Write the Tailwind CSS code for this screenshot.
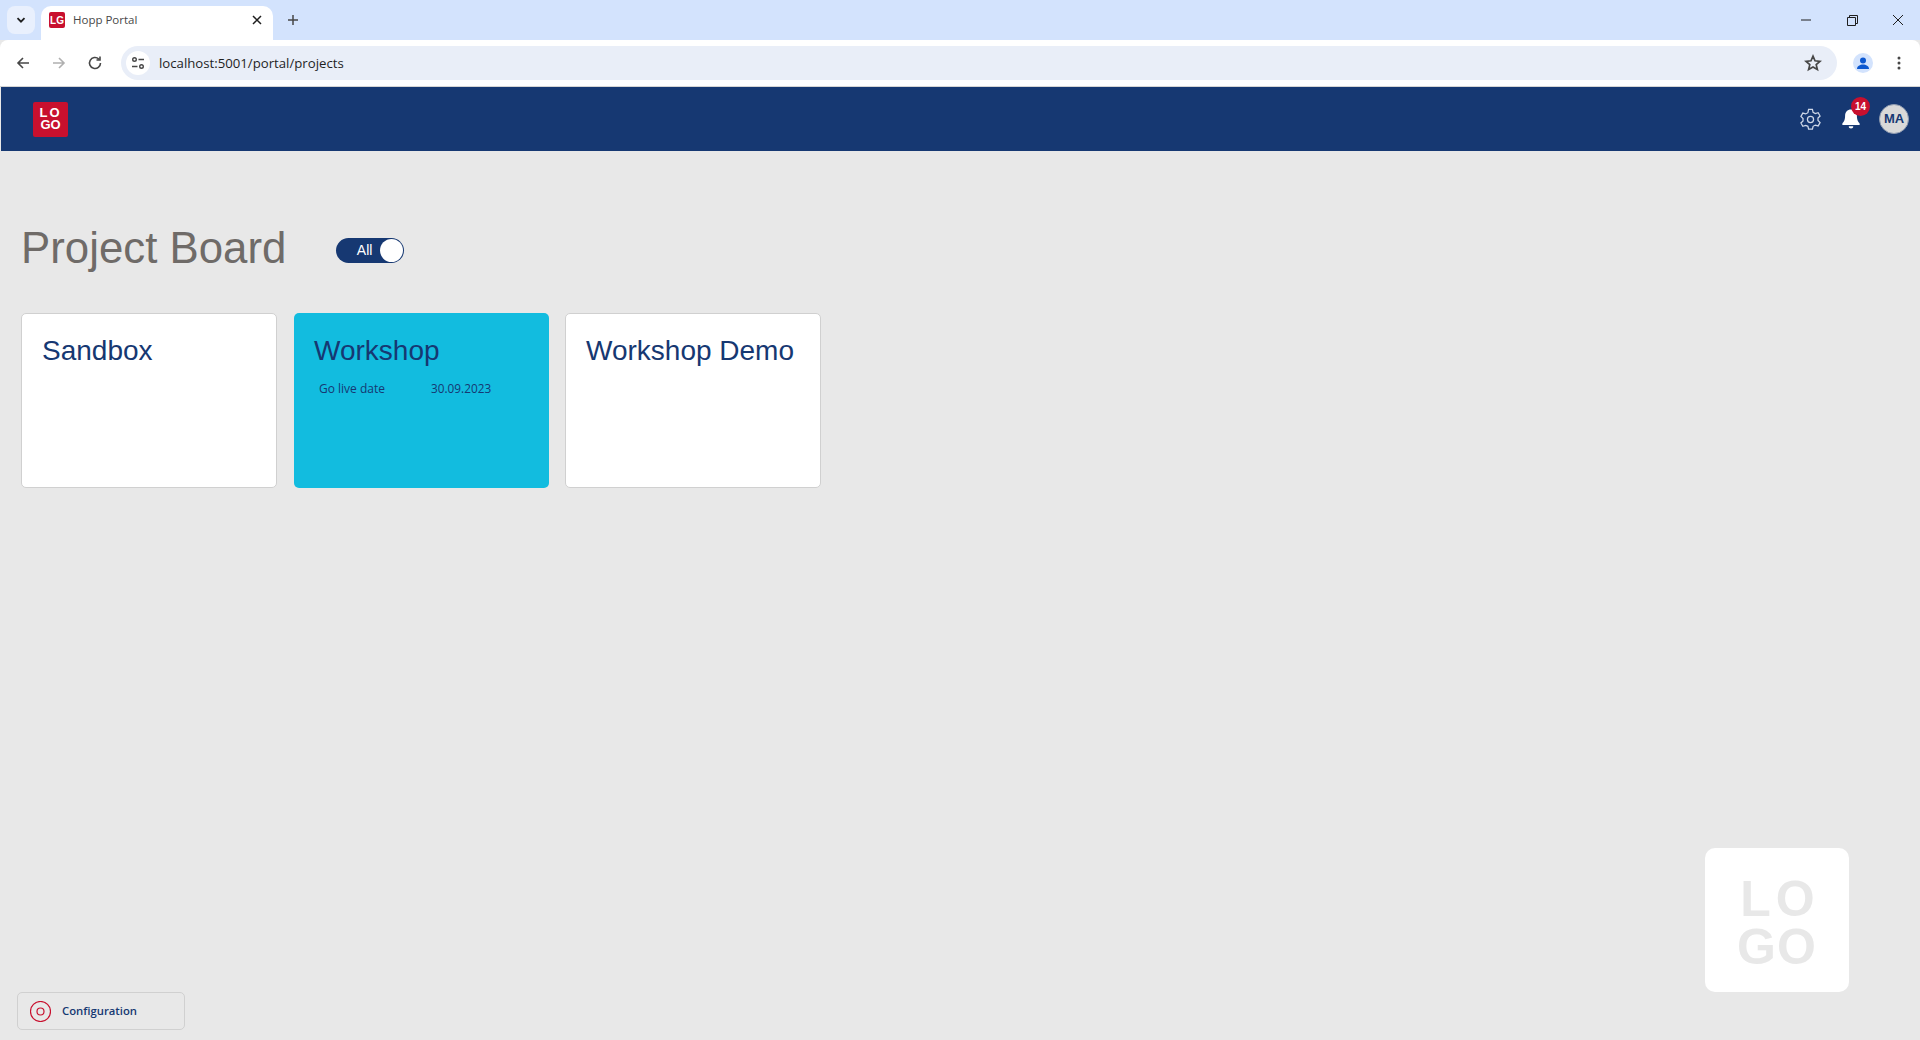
<!DOCTYPE html>
<html>
<head>
<meta charset="utf-8">
<title>Hopp Portal</title>
<script src="https://cdn.jsdelivr.net/npm/@tailwindcss/browser@4"></script>
</head>
<body class="h-[1040px] w-[1920px] overflow-hidden bg-[#e8e8e8] font-['Liberation_Sans',sans-serif]">

<!-- browser chrome -->
<div class="h-10 bg-[#d3e3fd] flex items-start relative">
    <div class="ml-[7px] mt-[6px] w-7 h-7 rounded-lg bg-[#e9f0fd] flex items-center justify-center">
        <svg width="12" height="12" viewBox="0 0 12 12" fill="none" stroke="#1f1f1f" stroke-width="1.8"><path d="M2.5 4.2 6 7.7l3.5-3.5"/></svg>
    </div>
    <div class="ml-[6px] mt-[6px] w-[232px] h-[34px] bg-white rounded-t-[10px] flex items-center pl-[8px] pr-[10px] pb-[6px]">
        <div class="w-4 h-4 rounded-[2px] bg-[#c8102e] text-white text-[10px] font-bold flex items-center justify-center">LG</div>
        <span class="ml-2 text-[11.5px] text-[#474747] font-['Open_Sans',sans-serif] flex-1">Hopp Portal</span>
        <svg width="12" height="12" viewBox="0 0 12 12" stroke="#1f1f1f" stroke-width="1.5"><path d="M2 2l8 8M10 2l-8 8"/></svg>
    </div>
    <svg class="ml-[14px] mt-[14px]" width="12" height="12" viewBox="0 0 12 12" stroke="#474747" stroke-width="1.5"><path d="M6 1v10M1 6h10"/></svg>
    <div class="ml-auto flex items-center h-10 pr-[16px]">
        <svg width="10" height="10" viewBox="0 0 10 10" stroke="#1f1f1f"><path d="M0 5h10"/></svg>
        <svg class="ml-[36px]" width="11" height="11" viewBox="0 0 11 11" fill="none" stroke="#1f1f1f"><path d="M.5 2.5h8v8h-8zM2.500 2.500v-2h8v8h-2"/></svg>
        <svg class="ml-[34px]" width="12" height="12" viewBox="0 0 12 12" stroke="#1f1f1f"><path d="M1 1l10 10M11 1 1 11"/></svg>
    </div>
</div>
<div class="h-[46px] bg-white rounded-tl-lg rounded-tr-lg flex items-center border-b border-[#d5d5d5] box-content -mb-px">
    <svg class="ml-[15px]" width="16" height="16" viewBox="0 0 16 16" fill="none" stroke="#474747" stroke-width="1.6"><path d="M14 8H3M8 3 3 8l5 5"/></svg>
    <svg class="ml-[20px]" width="16" height="16" viewBox="0 0 16 16" fill="none" stroke="#b0b0b0" stroke-width="1.6"><path d="M2 8h11M8 3l5 5-5 5"/></svg>
    <svg class="ml-[20px]" width="16" height="16" viewBox="0 0 16 16" fill="none" stroke="#474747" stroke-width="1.6"><path d="M13.5 8A5.5 5.5 0 1 1 11.8 4M13 1.500V5H9.500"/></svg>
    <div class="ml-[18px] w-[1716px] h-[34px] bg-[#e9eef8] rounded-full flex items-center pl-[5px]">
        <div class="w-6 h-6 rounded-full bg-white flex items-center justify-center">
            <svg width="14" height="14" viewBox="0 0 14 14" fill="none" stroke="#474747" stroke-width="1.4"><circle cx="3.5" cy="3.5" r="1.8"/><path d="M7.5 3.5H13M1 10.5h5.5"/><circle cx="10.5" cy="10.5" r="1.8"/></svg>
        </div>
        <span class="ml-[9px] pt-px text-[13.2px] text-[#1f1f1f] font-['Open_Sans',sans-serif]">localhost:5001/portal/projects</span>
        <svg class="ml-auto mr-[15px]" width="18" height="18" viewBox="0 0 18 18" fill="none" stroke="#474747" stroke-width="1.7"><path d="M9 2.200l2 4.600 5 .5-3.800 3.300 1.200 4.900L9 13l-4.400 2.500 1.200-4.900L2 7.300l5-.5z"/></svg>
    </div>
    <div class="ml-[16px] w-5 h-5 rounded-full bg-[#d3e3fd] flex items-center justify-center">
        <svg width="14" height="14" viewBox="0 0 14 14" fill="#0b57d0"><circle cx="7" cy="4.500" r="3"/><path d="M1 13c0-3 3-4.500 6-4.500s6 1.500 6 4.500z"/></svg>
    </div>
    <svg class="ml-[24px]" width="4" height="14" viewBox="0 0 4 14" fill="#474747"><circle cx="2" cy="2" r="1.500"/><circle cx="2" cy="7" r="1.500"/><circle cx="2" cy="12" r="1.500"/></svg>
</div>

<!-- app -->
<div class="ml-px h-[954px] flex flex-col relative">
    <header class="h-[64px] mt-px bg-[#163872] flex items-center pl-[32px] pr-[11px] shrink-0">
        <div class="w-[35px] h-[35px] rounded-[2px] bg-[#c8102e] text-white text-[13px] leading-[12px] font-bold text-center flex flex-col items-center justify-center">
            <span class="tracking-[2px]">LO</span>
            <span>GO</span>
        </div>
        <svg class="ml-auto" width="23" height="23" viewBox="0 0 24 24" fill="none" stroke="#cfd8e8" stroke-width="1.300"><circle cx="12" cy="12" r="3.200"/><path d="M10 1.500h4l.7 3 2.300 1.300 3-.9 2 3.500-2.200 2.100v2.600l2.200 2.100-2 3.500-3-.9-2.300 1.300-.7 3h-4l-.7-3L7 18.200l-3 .9-2-3.500 2.200-2.100v-2.600L2 8.800l2-3.500 3 .9 2.300-1.300z"/></svg>
        <div class="ml-[17px] relative w-6 h-6 flex items-center justify-center">
            <svg width="20" height="22" viewBox="0 0 22 24" fill="#ffffff"><path d="M11 1.500c-4 0-6.500 3-6.500 7 0 5-1.500 6.500-3 8.500v1.500h19V17c-1.500-2-3-3.500-3-8.500 0-4-2.500-7-6.500-7z"/><path d="M8.500 20h5c0 1.500-1 2.500-2.500 2.500S8.500 21.500 8.500 20z"/></svg>
            <div class="absolute -top-[10px] left-[12px] w-[19px] h-[19px] rounded-full bg-[#c8102e] text-white text-[10px] font-bold flex items-center justify-center">14</div>
        </div>
        <div class="ml-[16px] w-[30px] h-[30px] rounded-full bg-[#d9d9d9] border border-[#8f9bb0] text-[#163872] text-[13px] font-bold flex items-center justify-center">MA</div>
    </header>

    <main class="flex-1 pl-[20px] flex flex-col">
        <div class="flex items-center mt-[72px] h-[50px]">
            <h1 class="text-[43.8px] text-[#6f6b68] leading-none">Project Board</h1>
            <div class="ml-[50px] mt-[5px] w-[68px] h-[25px] rounded-full bg-[#163872] flex items-center justify-end pr-[1px] text-white text-[14px]">
                <span class="mr-[8px]">All</span>
                <div class="w-[23px] h-[23px] rounded-full bg-white"></div>
            </div>
        </div>

        <div class="flex gap-[16px] mt-[40px]">
            <div class="w-[256px] h-[175px] bg-white border border-[#d0d0d0] rounded-[5px] pl-[20px] pt-[19px]">
                <h2 class="text-[28px] leading-[36px] text-[#163872]">Sandbox</h2>
            </div>
            <div class="ml-px w-[255px] h-[175px] bg-[#12bcdf] rounded-[5px] pl-[20px] pt-[20px]">
                <h2 class="text-[28px] leading-[36px] text-[#163872]">Workshop</h2>
                <div class="flex mt-[11px] pl-[5px] text-[12px] text-[#163872] font-['Open_Sans',sans-serif]">
                    <span class="w-[112px]">Go live date</span>
                    <span class="text-[11.8px]">30.09.2023</span>
                </div>
            </div>
            <div class="w-[256px] h-[175px] bg-white border border-[#d0d0d0] rounded-[5px] pl-[20px] pt-[19px]">
                <h2 class="text-[28px] leading-[36px] text-[#163872]">Workshop Demo</h2>
            </div>
        </div>

        <div class="mt-auto mb-[10px] -ml-[4px] w-[168px] h-[38px] border border-[#d0d0d0] rounded-[5px] flex items-center pl-[12px]">
            <svg width="21" height="21" viewBox="0 0 21 21" fill="none" stroke="#c8102e" stroke-width="1.200"><circle cx="10.500" cy="10.500" r="10"/><circle cx="10.500" cy="10.500" r="3.500"/></svg>
            <span class="ml-[11px] text-[11.3px] font-semibold text-[#163872] font-['Open_Sans',sans-serif]">Configuration</span>
        </div>
    </main>

    <div class="absolute left-[1704px] top-[762px] w-[144px] h-[144px] rounded-[10px] bg-white text-[#e8e8e8] text-[50px] leading-[48px] font-bold text-center flex flex-col items-center justify-center pt-[5px]">
        <span class="tracking-[5px] pl-[6px]">LO</span>
        <span class="tracking-[1px]">GO</span>
    </div>
</div>
</body>
</html>
